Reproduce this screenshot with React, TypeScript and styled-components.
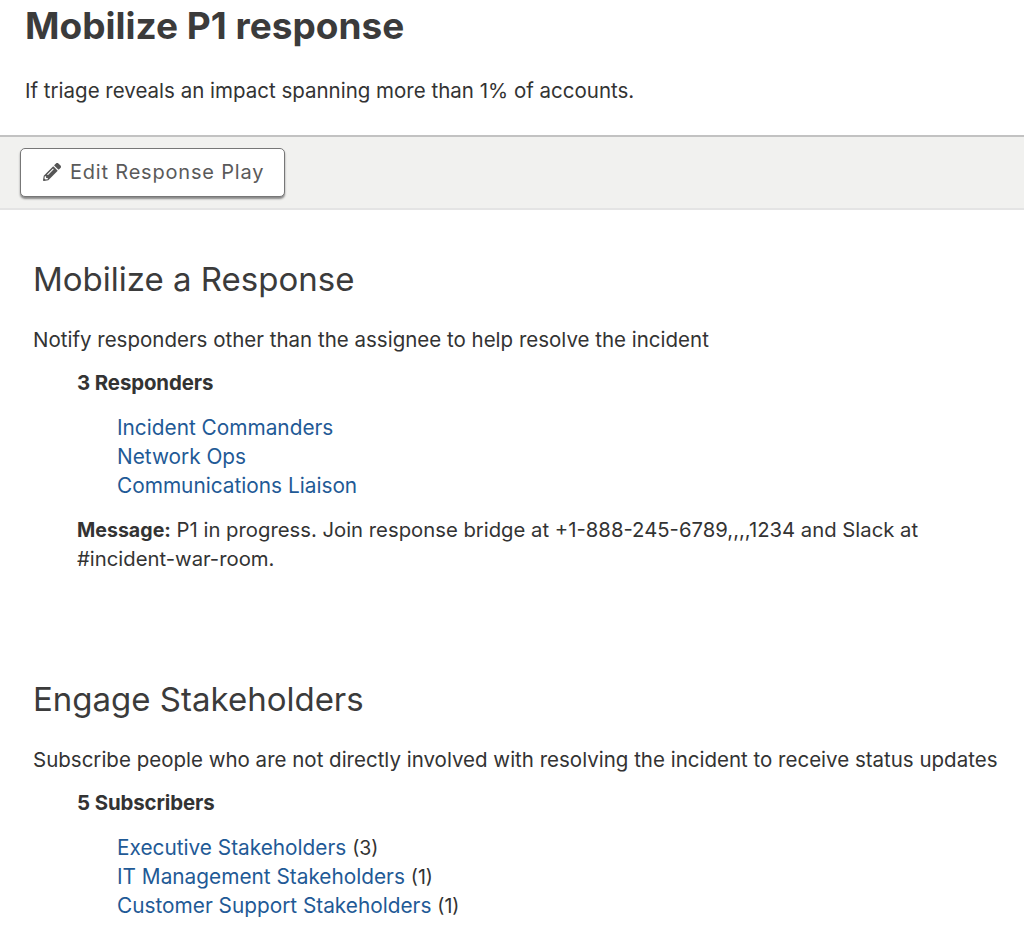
import React from "react";
import styled, { createGlobalStyle } from "styled-components";
import { FaPencilAlt } from "react-icons/fa";

const Global = createGlobalStyle`
  html, body { margin: 0; padding: 0; background: #fff; }
  body { font-family: "Inter", "Noto Sans", "Liberation Sans", sans-serif; color: #333; overflow: hidden; }
`;
const Page = styled.div`width: 1024px; height: 939px; overflow: hidden;`;
const Header = styled.header`padding: 0 25px; height: 135px; box-sizing: border-box;`;
const Title = styled.h1`margin: 0; padding-top: 3px; font-size: 37px; line-height: 46px; font-weight: 700; color: #3b3b3b;`;
const Lead = styled.p`margin: 27px 0 0; font-size: 20.5px; line-height: 29px; color: #333;`;
const Toolbar = styled.div`height: 75px; box-sizing: border-box; background: #f1f1ef; border-top: 2px solid #c2c2c2; border-bottom: 2px solid #e4e4e4; padding: 11px 20px;`;
const EditButton = styled.button`
  width: 265px; height: 49px; display: flex; align-items: center; gap: 9px; padding: 0 0 2px 22px;
  background: #fff; border: 1px solid #777; border-radius: 5px; box-shadow: 0 2px 2px #888;
  font: 20px "Inter", "Noto Sans", sans-serif; letter-spacing: 0.8px; color: #5a5a5a;
`;
const Section = styled.section<{ $top: number }>`padding: ${(p) => p.$top}px 0 0 33px;`;
const Heading = styled.h2`margin: 0; font-size: 33px; line-height: 38px; font-weight: 400; color: #3b3b3b;`;
const Desc = styled.p`margin: 27px 0 0; font-size: 20.5px; line-height: 29px;`;
const Indented = styled.div`margin-left: 44px;`;
const Count = styled.div`margin-top: 14px; font-size: 20.4px; line-height: 29px; font-weight: 700; letter-spacing: -0.1px;`;
const Links = styled.ul`list-style: none; margin: 16px 0 0 40px; padding: 0;`;
const Item = styled.li`font-size: 20.8px; line-height: 29px; height: 29px;`;
const Link = styled.a`color: #1f5a96; text-decoration: none;`;
const Tally = styled.span`font-size: 19.5px; line-height: 1;`;
const Message = styled.p`margin: 15px 0 0; font-size: 20.3px; line-height: 29px; width: 880px;`;
const Strong = styled.b`font-size: 19.6px; font-weight: 700; line-height: 1;`;

export default function App() {
  return (
    <Page>
      <Global />
      <Header>
        <Title>Mobilize P1 response</Title>
        <Lead>If triage reveals an impact spanning more than 1% of accounts.</Lead>
      </Header>
      <Toolbar><EditButton><FaPencilAlt size={18} color="#555" />Edit Response Play</EditButton></Toolbar>
      <Section $top={50}>
        <Heading>Mobilize a Response</Heading>
        <Desc>Notify responders other than the assignee to help resolve the incident</Desc>
        <Indented>
          <Count>3 Responders</Count>
          <Links>
            <Item><Link>Incident Commanders</Link></Item>
            <Item><Link>Network Ops</Link></Item>
            <Item><Link>Communications Liaison</Link></Item>
          </Links>
          <Message><Strong>Message:</Strong> P1 in progress. Join response bridge at +1-888-245-6789,,,,1234 and Slack at #incident-war-room.</Message>
        </Indented>
      </Section>
      <Section $top={107}>
        <Heading>Engage Stakeholders</Heading>
        <Desc>Subscribe people who are not directly involved with resolving the incident to receive status updates</Desc>
        <Indented>
          <Count>5 Subscribers</Count>
          <Links>
            <Item><Link>Executive Stakeholders</Link> <Tally>(3)</Tally></Item>
            <Item><Link>IT Management Stakeholders</Link> <Tally>(1)</Tally></Item>
            <Item><Link>Customer Support Stakeholders</Link> <Tally>(1)</Tally></Item>
          </Links>
        </Indented>
      </Section>
    </Page>
  );
}
